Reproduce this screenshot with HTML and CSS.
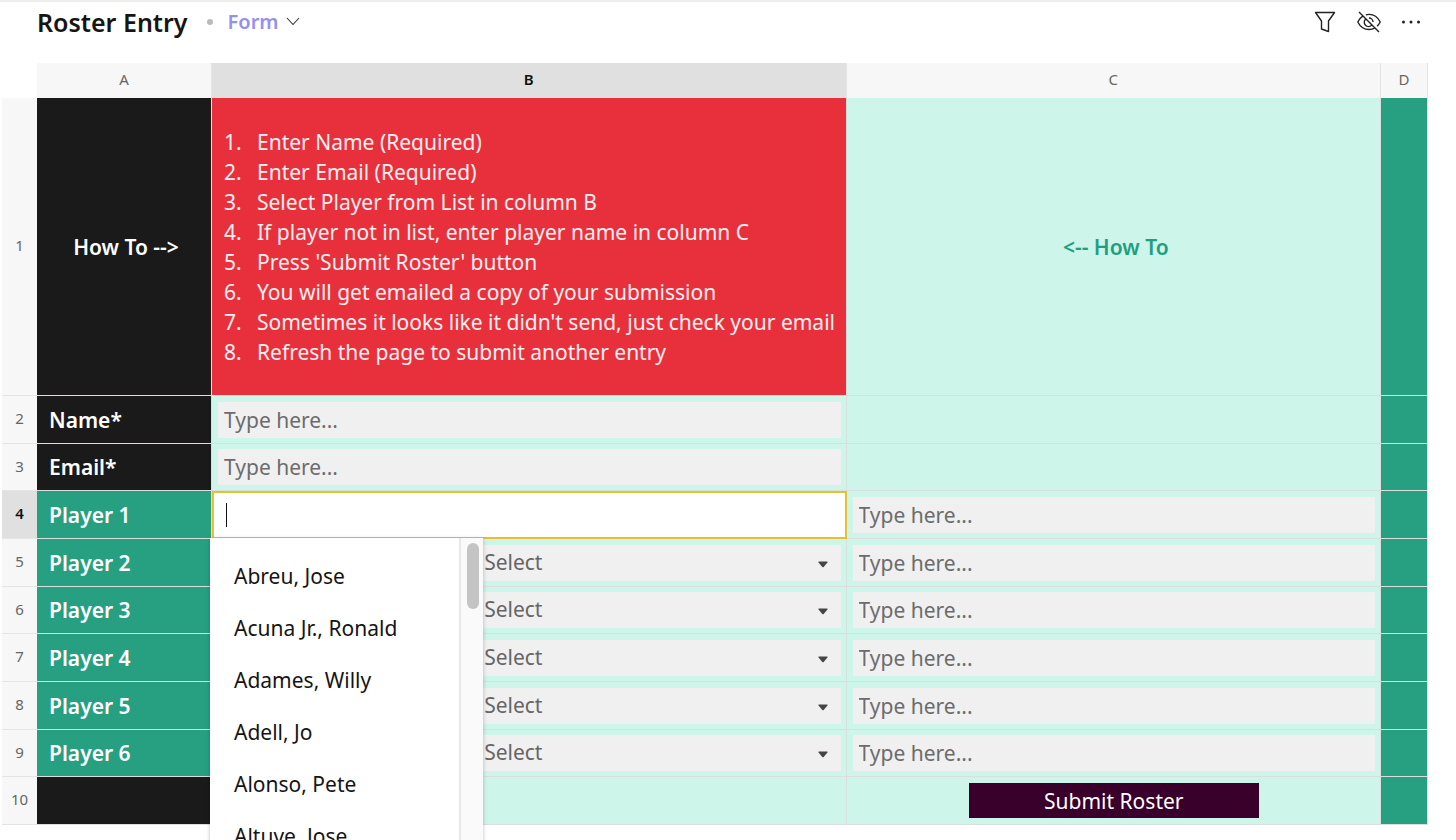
FILE: index.html
```html
<!DOCTYPE html>
<html lang="en">
<head>
<meta charset="utf-8">
<title>Roster Entry</title>
<link rel="stylesheet" href="styles.css">
</head>
<body>
<header class="topbar">
  <h1 class="title">Roster Entry</h1>
  <span class="dot"></span>
  <button class="view" type="button">Form
    <svg width="14" height="9" viewBox="0 0 14 9" fill="none" stroke="#333" stroke-width="1.1"><path d="M1 1l6 6.500L13 1"/></svg>
  </button>
  <div class="tools">
    <button class="tool" type="button" aria-label="Filter">
      <svg width="24" height="24" viewBox="0 0 24 24" fill="none" stroke="#222" stroke-width="1.4" stroke-linejoin="round"><path d="M2.500 2.500h19L15.500 11v10.500l-7-2.500v-8z"/></svg>
    </button>
    <button class="tool" type="button" aria-label="Hidden columns">
      <svg width="26" height="24" viewBox="0 0 26 24" fill="none" stroke="#222" stroke-width="1.4"><path d="M3 2l20 20M6.800 6.200C4.500 7.700 2.800 9.800 1.800 12c2.400 4.800 6.400 7.500 11.200 7.500 2.200 0 4.200-.6 5.900-1.600M9.800 4.800c1-.3 2.100-.4 3.200-.4 4.700 0 8.800 2.700 11.200 7.600-.8 1.600-1.800 3-3.100 4.100M9.500 9.200a4.200 4.200 0 0 0 6 6M13 8a4 4 0 0 1 4 4"/></svg>
    </button>
    <button class="tool" type="button" aria-label="More">
      <svg width="20" height="24" viewBox="0 0 20 24" fill="#222"><circle cx="2.500" cy="12" r="1.500"/><circle cx="10" cy="12" r="1.500"/><circle cx="17.500" cy="12" r="1.500"/></svg>
    </button>
  </div>
</header>
<main class="sheet">
<table class="grid">
  <colgroup><col class="col-num"><col class="col-a"><col class="col-b"><col class="col-c"><col class="col-d"></colgroup>
  <thead>
    <tr><td class="corner"></td><th scope="col">A</th><th scope="col" class="active">B</th><th scope="col">C</th><th scope="col">D</th></tr>
  </thead>
  <tbody>
    <tr class="intro">
      <th scope="row">1</th>
      <td class="dark center">How To --&gt;</td>
      <td class="red">
        <ol class="steps">
          <li>Enter Name (Required)</li>
          <li>Enter Email (Required)</li>
          <li>Select Player from List in column B</li>
          <li>If player not in list, enter player name in column C</li>
          <li>Press 'Submit Roster' button</li>
          <li>You will get emailed a copy of your submission</li>
          <li>Sometimes it looks like it didn't send, just check your email</li>
          <li>Refresh the page to submit another entry</li>
        </ol>
      </td>
      <td class="mint hint">&lt;-- How To</td>
      <td class="green"></td>
    </tr>
    <tr><th scope="row">2</th><td class="dark"><label for="name">Name*</label></td><td class="mint"><input class="field" id="name" type="text" placeholder="Type here..."></td><td class="mint"></td><td class="green"></td></tr>
    <tr><th scope="row">3</th><td class="dark"><label for="email">Email*</label></td><td class="mint"><input class="field" id="email" type="email" placeholder="Type here..."></td><td class="mint"></td><td class="green"></td></tr>
    <tr>
      <th scope="row" class="active">4</th>
      <td class="green"><label for="p1">Player 1</label></td>
      <td class="editing">
        <input class="combo" id="p1" type="text">
        <span class="caret"></span>
        <div class="menu">
          <ul class="options">
            <li><button type="button">Abreu, Jose</button></li>
            <li><button type="button">Acuna Jr., Ronald</button></li>
            <li><button type="button">Adames, Willy</button></li>
            <li><button type="button">Adell, Jo</button></li>
            <li><button type="button">Alonso, Pete</button></li>
            <li><button type="button">Altuve, Jose</button></li>
          </ul>
          <div class="track"><div class="thumb"></div></div>
        </div>
      </td>
      <td class="mint"><input class="field" type="text" aria-label="Player 1 name" placeholder="Type here..."></td><td class="green"></td>
    </tr>
    <tr><th scope="row">5</th><td class="green"><label for="p2">Player 2</label></td><td class="mint"><div class="picker"><select id="p2"><option>Select</option></select><svg width="10" height="7" viewBox="0 0 10 7"><path d="M1 .5h8q1 .2.4 1L5.700 6q-.7.7-1.400 0L.6 1.500Q0 .7 1 .5z" fill="#444"/></svg></div></td><td class="mint"><input class="field" type="text" aria-label="Player 2 name" placeholder="Type here..."></td><td class="green"></td></tr>
    <tr><th scope="row">6</th><td class="green"><label for="p3">Player 3</label></td><td class="mint"><div class="picker"><select id="p3"><option>Select</option></select><svg width="10" height="7" viewBox="0 0 10 7"><path d="M1 .5h8q1 .2.4 1L5.700 6q-.7.7-1.400 0L.6 1.500Q0 .7 1 .5z" fill="#444"/></svg></div></td><td class="mint"><input class="field" type="text" aria-label="Player 3 name" placeholder="Type here..."></td><td class="green"></td></tr>
    <tr><th scope="row">7</th><td class="green"><label for="p4">Player 4</label></td><td class="mint"><div class="picker"><select id="p4"><option>Select</option></select><svg width="10" height="7" viewBox="0 0 10 7"><path d="M1 .5h8q1 .2.4 1L5.700 6q-.7.7-1.400 0L.6 1.500Q0 .7 1 .5z" fill="#444"/></svg></div></td><td class="mint"><input class="field" type="text" aria-label="Player 4 name" placeholder="Type here..."></td><td class="green"></td></tr>
    <tr><th scope="row">8</th><td class="green"><label for="p5">Player 5</label></td><td class="mint"><div class="picker"><select id="p5"><option>Select</option></select><svg width="10" height="7" viewBox="0 0 10 7"><path d="M1 .5h8q1 .2.4 1L5.700 6q-.7.7-1.400 0L.6 1.500Q0 .7 1 .5z" fill="#444"/></svg></div></td><td class="mint"><input class="field" type="text" aria-label="Player 5 name" placeholder="Type here..."></td><td class="green"></td></tr>
    <tr><th scope="row">9</th><td class="green"><label for="p6">Player 6</label></td><td class="mint"><div class="picker"><select id="p6"><option>Select</option></select><svg width="10" height="7" viewBox="0 0 10 7"><path d="M1 .5h8q1 .2.4 1L5.700 6q-.7.7-1.400 0L.6 1.500Q0 .7 1 .5z" fill="#444"/></svg></div></td><td class="mint"><input class="field" type="text" aria-label="Player 6 name" placeholder="Type here..."></td><td class="green"></td></tr>
    <tr><th scope="row">10</th><td class="dark"></td><td class="mint"></td><td class="mint"><button class="submit" type="button">Submit Roster</button></td><td class="green"></td></tr>
  </tbody>
</table>
</main>
</body>
</html>
```
FILE: styles.css
```css
* { box-sizing: border-box; }
body {
  margin: 0;
  height: 100vh;
  overflow: hidden;
  background: #fff;
  border-top: 2px solid #eee;
  font-family: "Noto Sans", sans-serif;
  font-size: 21px;
  color: #151515;
}
button, input, select { font: inherit; color: inherit; }
button { border: 0; background: none; padding: 0; cursor: pointer; }

.topbar {
  display: flex;
  align-items: center;
  height: 61px;
  padding: 0 35px 22px 37px;
}
.title { margin: 0; font-size: 25px; font-weight: 600; line-height: 32px; }
.dot { width: 6px; height: 6px; margin: 0 15px 0 19px; border-radius: 50%; background: #bbb; }
.view {
  display: flex;
  align-items: center;
  gap: 7px;
  font-size: 20px;
  font-weight: 600;
  color: #958ff0;
}
.tools { display: flex; gap: 19px; margin-left: auto; }
.tool { display: flex; }

.sheet { padding: 0 28px 0 2px; }
.grid {
  width: 100%;
  table-layout: fixed;
  border-collapse: separate;
  border-spacing: 0;
}
.col-num { width: 35px; }
.col-a { width: 175px; }
.col-b { width: 44.5%; }
.col-c { width: auto; }
.col-d { width: 47px; }

th {
  padding: 0 0 3px;
  background: #f7f7f7;
  border-bottom: 1px solid #e4e4e4;
  color: #666;
  font-size: 15px;
  font-weight: 400;
  text-align: center;
}
thead th { height: 35px; border-right: 1px solid #e4e4e4; border-bottom: 0; }
th.active { background: #e0e0e0; color: #111; font-weight: 600; }
.corner { padding: 0; border: 0; }

tbody td {
  height: 48px;
  padding: 0 5px 0 6px;
  border-right: 1px solid #d8dfdd;
  border-bottom: 1px solid #d8dfdd;
}
tbody tr:nth-child(3n) td { height: 47px; }
tbody .intro td { height: 298px; }
tbody .dark, tbody .green { padding: 0 12px; color: #fff; font-weight: 600; }
.dark { background: #1a1a1a; }
.green { background: #27a082; }
.mint { background: #cef5e9; }
tbody .center { padding: 0 0 0 4px; text-align: center; }
tbody .hint { padding-left: 10px; text-align: center; color: #1f9f7f; font-weight: 600; }
tbody .red { padding: 0 0 0 12px; background: #e8303c; color: #fff0f1; }

.steps {
  margin: 0;
  padding: 0;
  list-style: none;
  counter-reset: step;
  line-height: 30px;
  white-space: nowrap;
}
.steps li { display: flex; counter-increment: step; }
.steps li::before { content: counter(step) "."; width: 33px; }

.field, .picker {
  display: block;
  width: 100%;
  height: 36px;
  border: 0;
  background: #f0f0f0;
}
.field { padding: 0 6px; outline: 0; }
.field::placeholder { color: #6c6c6c; opacity: 1; }
.picker { position: relative; }
.picker select {
  width: 100%;
  height: 34px;
  padding: 0 32px 0 0;
  border: 0;
  appearance: none;
  background: none;
  color: #666;
  text-align: center;
  text-align-last: center;
}
.picker svg { position: absolute; right: 13px; top: 16px; pointer-events: none; }

tbody .editing { position: relative; padding: 0; border: 0; background: #fff; }
.combo {
  display: block;
  width: 100%;
  height: 48px;
  padding: 0 12px;
  border: 2px solid #e8c02d;
  background: #fff;
  outline: 0;
}
.caret { position: absolute; left: 14px; top: 12px; width: 1px; height: 24px; background: #111; }
.menu {
  position: absolute;
  z-index: 2;
  left: -2px;
  top: 47px;
  display: flex;
  width: 273px;
  height: 360px;
  background: #fff;
  box-shadow: 0 1px 4px rgba(0, 0, 0, .25);
}
.options { flex: 1; margin: 0; padding: 12px 0; list-style: none; overflow: hidden; }
.options button { display: block; width: 100%; height: 52px; padding: 0 24px; text-align: left; white-space: nowrap; }
.track { width: 24px; padding: 5px 6px; border-left: 2px solid #e8e8e8; background: #fafafa; }
.thumb { width: 12px; height: 66px; border-radius: 6px; background: #c4c4c4; }

.submit {
  display: block;
  width: 290px;
  max-width: 100%;
  height: 35px;
  margin: 0 auto;
  background: #38002a;
  color: #fff;
}
```
